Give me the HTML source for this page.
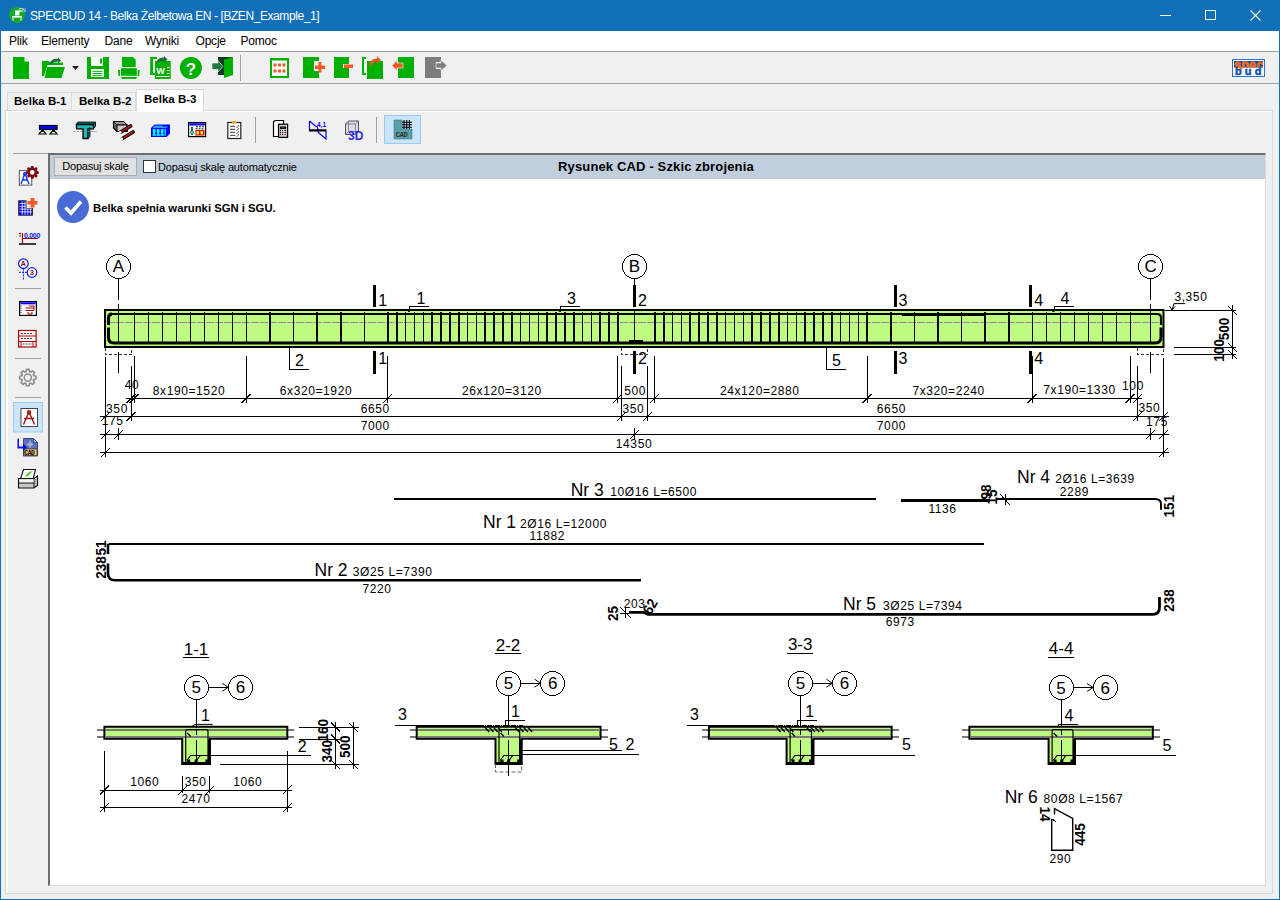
<!DOCTYPE html>
<html><head><meta charset="utf-8">
<style>
*{margin:0;padding:0;box-sizing:border-box}
html,body{width:1280px;height:900px;overflow:hidden;background:#f0f0f0;font-family:"Liberation Sans",sans-serif;}
.abs{position:absolute}
#title{left:0;top:0;width:1280px;height:31px;background:#1170b8;color:#fff;font-size:12px;letter-spacing:-0.42px}
#menu{left:1px;top:31px;width:1278px;height:20px;background:#fff;font-size:12px;color:#000;letter-spacing:-0.2px}
#menu span{position:absolute;top:3px}
#tb{left:1px;top:51px;width:1278px;height:33px;background:#f0f0f0;border-top:1px solid #a0a0a0;border-bottom:1px solid #a0a0a0}
#frame{left:0;top:0;width:1280px;height:900px;border:1px solid #1170b8;border-top:none;pointer-events:none}
.tab{position:absolute;font-weight:bold;font-size:11.5px;color:#000;border:1px solid #d9d9d9;border-bottom:none;background:#f0f0f0}
#panel{left:5px;top:110px;width:1268px;height:784px;border:1px solid #d9d9d9;background:#f0f0f0}
#panelw{left:6px;top:111px;width:1266px;height:782px;border-top:1px solid #fff;border-left:2px solid #fff}
#side{left:13px;top:153px;width:35px;height:733px;border-top:1px solid #a0a0a0;background:#f0f0f0}
#canvas{left:48px;top:153px;width:1218px;height:733px;background:#fff;border-left:2px solid #6e6e6e;border-top:2px solid #6e6e6e;border-right:1px solid #dcdcdc;border-bottom:1px solid #dcdcdc}
#hdr{left:50px;top:155px;width:1215px;height:24px;background:#c1cedc}
#btn{left:54px;top:157px;width:83px;height:19px;background:#e1e1e1;border:1px solid #adadad;font-size:11px;letter-spacing:-0.2px;color:#000;text-align:center;line-height:17px}
#chk{left:143px;top:160px;width:13px;height:13px;background:#fff;border:1px solid #333}
</style></head><body>
<div id="title" class="abs">
  <svg class="abs" style="left:8px;top:6px" width="18" height="18" viewBox="0 0 18 18">
    <circle cx="9" cy="9" r="8" fill="#12aa2a"/>
    <rect x="7" y="4.5" width="4.5" height="5" fill="#fff"/>
    <rect x="4" y="10" width="10" height="1.6" fill="#fff"/>
    <rect x="4.5" y="11.6" width="1" height="3" fill="#fff"/><rect x="12.5" y="11.6" width="1" height="3" fill="#fff"/>
    <text x="11" y="5.5" font-size="5" fill="#fff" font-family="Liberation Sans">EN</text>
  </svg>
  <span class="abs" style="left:30px;top:9px;white-space:nowrap">SPECBUD 14 - Belka Żelbetowa EN - [BZEN_Example_1]</span>
  <svg class="abs" style="left:1150px;top:0" width="130" height="31">
    <line x1="10" y1="15.5" x2="21" y2="15.5" stroke="#fff" stroke-width="1"/>
    <rect x="55.5" y="10.5" width="10" height="9" fill="none" stroke="#fff" stroke-width="1"/>
    <line x1="100.5" y1="10.5" x2="110.5" y2="20.5" stroke="#fff" stroke-width="1.1"/>
    <line x1="110.5" y1="10.5" x2="100.5" y2="20.5" stroke="#fff" stroke-width="1.1"/>
  </svg>
</div>
<div id="menu" class="abs">
  <span style="left:8px">Plik</span><span style="left:40px">Elementy</span><span style="left:103.5px">Dane</span>
  <span style="left:144px">Wyniki</span><span style="left:194.5px">Opcje</span><span style="left:239.5px">Pomoc</span>
</div>
<div id="tb" class="abs"></div>
<!--TOOLBAR-->
<svg class="abs" style="left:0;top:0;z-index:3" width="1280" height="150">
 <g fill="#00b000">
  <!-- new -->
  <path d="M13 57 H24 L29 62 V79 H13 Z"/>
  <path d="M24.5 57.5 L28.5 61.5 H24.5 Z" fill="#fff"/>
  <!-- open -->
  <path d="M42 61 H49 L50 62.5 H63 V65 H47.5 L44 76 H42 Z"/>
  <path d="M47 67 H65 L61.5 78 H44.5 Z"/>
  <path d="M49 64 Q52 58 58 59 L58 57.5 L61 60.5 L58 63.5 L58 61.5 Q53 61.5 51 65 Z" fill="#1d6e3a"/>
  <path d="M72 66 H79 L75.5 70 Z" fill="#222"/>
  <!-- save -->
  <path d="M87 57 H109 V79 H87 Z"/>
  <rect x="91" y="57" width="12" height="9" fill="#fff"/>
  <rect x="100" y="58.5" width="2" height="5"/>
  <rect x="91" y="69" width="13" height="8" fill="#fff"/>
  <rect x="92.5" y="70.8" width="10" height="1"/><rect x="92.5" y="73" width="10" height="1"/><rect x="92.5" y="75.2" width="10" height="1"/>
  <!-- print -->
  <path d="M122 57 H133 L135.7 59.7 V67 H122 Z"/>
  <path d="M120.9 68.2 H136.8 V75.8 H120.9 Z"/>
  <path d="M118 70 L120 70 L120 76 L118.5 76 Z"/><path d="M137.7 70 L139.7 70 L139.2 76 L137.7 76 Z"/>
  <path d="M121 77 H137 L136 79 H122 Z"/>
  <!-- word -->
  <path d="M150.2 57 H157 V59 H153 V73 H155 V75 H150.2 Z"/>
  <path d="M155 61 H170.7 V79 H155 Z"/>
  <path d="M156.5 61.5 Q159 57 164 57.5 V56 L167.5 59.5 L164 63 V61 Q160 60.5 158 63 Z" fill="#1d6e3a"/>
  <text x="156.3" y="73.5" font-size="9" font-weight="bold" fill="#fff" font-family="Liberation Sans">W</text>
  <rect x="167" y="67" width="2.5" height="1" fill="#fff"/><rect x="167" y="70" width="2.5" height="1" fill="#fff"/><rect x="167" y="73" width="2.5" height="1" fill="#fff"/>
  <rect x="156" y="76" width="13.5" height="1" fill="#fff"/>
  <!-- help -->
  <circle cx="190.9" cy="67.9" r="11"/>
  <text x="190.9" y="74.6" font-size="17" font-weight="bold" fill="#fff" text-anchor="middle" font-family="Liberation Sans">?</text>
  <!-- exit -->
  <path d="M218 57 H233 V75 H218 Z" fill="#0a3d1f"/>
  <path d="M224 59.5 L233 57 V75 L224 78 Z"/>
  <path d="M212 63 H218 V60.5 L223 66.5 L218 72 V69.5 H212 Z" fill="#1d7a40" stroke="#fff" stroke-width="0.6"/>
 </g>
 <rect x="240" y="55" width="1" height="26" fill="#a0a0a0"/>
 <g fill="#00b000">
  <!-- grid -->
  <path d="M270 58 H289 V78 H270 Z"/>
  <rect x="272" y="60.5" width="15" height="15.5" fill="#fff"/>
  <g fill="#f05a28">
   <rect x="273.5" y="63.5" width="3" height="3"/><rect x="278" y="63.5" width="3" height="3"/><rect x="282.5" y="63.5" width="3" height="3"/>
   <rect x="273.5" y="69.5" width="3" height="3"/><rect x="278" y="69.5" width="3" height="3"/><rect x="282.5" y="69.5" width="3" height="3"/>
  </g>
  <!-- add -->
  <path d="M303 57 H319 V61 H314 V71 H319 V78 H303 Z"/>
  <path d="M315 62.5 H318.5 V59 H321.5 V62.5 H325 V66 H321.5 V69.5 H318.5 V66 H315 Z" fill="#f05a28" transform="translate(0,3)"/>
  <!-- minus -->
  <path d="M334 57 H349 V64 H343 V68 H349 V78 H334 Z"/>
  <rect x="344" y="64.5" width="9" height="3.5" fill="#f05a28"/>
  <!-- copy -->
  <path d="M362 57 H366 V59 H364 V73 H366 V75 H362 Z"/>
  <path d="M367 61 H383 V79 H367 Z"/>
  <path d="M369 65 Q371 58 377 58.5 V56 L381 60 L377 64 V61.5 Q372 61 371.5 66 Z" fill="#f05a28"/>
  <!-- back -->
  <path d="M398 57 H414 V78 H398 Z"/>
  <path d="M392 65.5 L397 60 V63 H403 V68 H397 V71 Z" fill="#f05a28" stroke="#fff" stroke-width="0.6"/>
  <!-- forward -->
  <path d="M425 57 H441 V62 H436 V69 H441 V78 H425 Z" fill="#7d7d7d"/>
  <path d="M436 63 H441 V60 L447 65.5 L441 71 V68 H436 Z" fill="#7d7d7d" stroke="#fff" stroke-width="0.6"/>
 </g>
 <!-- logo -->
 <rect x="1232.5" y="59.5" width="32" height="17" fill="#fff" stroke="#2a72c8" stroke-width="1"/>
 <defs><clipPath id="band"><rect x="1234" y="61" width="29" height="6.5"/></clipPath></defs>
 <rect x="1234" y="61" width="29" height="6.5" fill="#0b50b0"/>
 <text x="1248.8" y="69" font-size="12.5" font-weight="bold" fill="#f26a1b" text-anchor="middle" font-family="Liberation Sans" letter-spacing="0.3" clip-path="url(#band)" stroke="#f26a1b" stroke-width="0.8">spec</text>
 <rect x="1239.5" y="67.5" width="3" height="2" fill="#f26a1b"/>
 <text x="1249.8" y="75" font-size="11" font-weight="bold" fill="#0b50b0" text-anchor="middle" font-family="Liberation Sans" letter-spacing="3.2" stroke="#0b50b0" stroke-width="0.5">bud</text>
</svg>

<div class="tab" style="left:7px;top:92px;width:65px;height:18px;padding:2px 0 0 6px">Belka B-1</div>
<div class="tab" style="left:71px;top:92px;width:65px;height:18px;padding:2px 0 0 7px">Belka B-2</div>
<div id="panel" class="abs"></div>
<div id="panelw" class="abs"></div>
<div class="tab" style="left:136px;top:89px;width:68px;height:22px;padding:3px 0 0 7px;background:#fff;z-index:2">Belka B-3</div>
<!--INNERTB-->
<div id="side" class="abs"></div>
<svg class="abs" style="left:0;top:0;z-index:3" width="440" height="500">
 <!-- beam -->
 <rect x="39.5" y="125.5" width="17.5" height="4" fill="#0000ff" stroke="#000" stroke-width="1.2"/>
 <path d="M42.5 130 L46 134 H39 Z M53.5 130 L57 134 H50 Z" fill="#fff" stroke="#000" stroke-width="1.2"/>
 <!-- T -->
 <path d="M78 122 H95.5 L93.5 124.5 H76 Z" fill="#0e6d6d" stroke="#000" stroke-width="0.8"/>
 <path d="M76.5 124.5 H93.5 V128.8 H88 V138.5 H83 V128.8 H76.5 Z" fill="#1ab8b8" stroke="#000" stroke-width="1.3"/>
 <path d="M93.5 124.5 L95.5 122 V126.5 L93.5 128.8 Z M88 128.8 L90 127.5 V136.5 L88 138.5 Z" fill="#0e6d6d" stroke="#000" stroke-width="0.8"/>
 <line x1="73.5" y1="131.5" x2="97" y2="131.5" stroke="#888" stroke-width="0.8" stroke-dasharray="2 1.5"/>
 <!-- box + rods -->
 <path d="M113.5 121.5 H123.5 L127 125 V131.5 H117 L113.5 128 Z" fill="#666" stroke="#000" stroke-width="1.2"/>
 <path d="M113.5 121.5 H123.5 L127 125 H117 Z" fill="#999" stroke="#000" stroke-width="0.8"/>
 <rect x="117" y="125" width="10" height="6.5" fill="#c8c8c8" stroke="#000" stroke-width="1"/>
 <path d="M121 132 L130.5 126" stroke="#000" stroke-width="3.8" stroke-linecap="round"/>
 <path d="M122 131.4 L130.5 126" stroke="#c01020" stroke-width="1.6" stroke-linecap="round"/>
 <circle cx="120.3" cy="132.4" r="1.3" fill="#fff"/>
 <path d="M122.5 138.5 L133 132" stroke="#000" stroke-width="3.8" stroke-linecap="round"/>
 <path d="M123.5 137.9 L133 132" stroke="#c01020" stroke-width="1.6" stroke-linecap="round"/>
 <circle cx="121.8" cy="138.9" r="1.3" fill="#fff"/>
 <!-- blue box -->
 <path d="M151 128 L154.5 124.5 H170 V133.5 L166.5 137 H151 Z" fill="#0000ff"/>
 <path d="M154.5 125.5 H162 L163 126.5 H168.5 L166 128 H152.5 Z" fill="#3399ff"/>
 <g fill="#00ffff">
  <path d="M152.8 129 H155.5 V132.5 L154.8 134 H155.8 V135.8 H152.5 V134 H153.5 L152.8 132.5 Z"/>
  <path d="M156.8 129 H159.5 V132.5 L158.8 134 H159.8 V135.8 H156.5 V134 H157.5 L156.8 132.5 Z"/>
  <path d="M160.8 129 H163.5 V132.5 L162.8 134 H163.8 V135.8 H160.5 V134 H161.5 L160.8 132.5 Z"/>
  <path d="M164.5 129 H165.8 V135.8 H164.5 Z"/>
 </g>
 <!-- window -->
 <rect x="188.6" y="122.6" width="17" height="14" fill="#fff" stroke="#000" stroke-width="1.2"/>
 <rect x="189.3" y="123.3" width="15.6" height="2.2" fill="#0000ff"/>
 <rect x="195.5" y="130" width="9" height="5.5" fill="#c00000"/>
 <path d="M196.5 131 H199 V134.5 H196.5 Z M200.5 131 H203 V134.5 H200.5 Z" fill="#ffee00"/>
 <path d="M191.5 127 V130.5 L190.5 132.5 L192 135 L193.5 132.5 L192.5 130.5 V127 Z" fill="#00eeee" stroke="#000" stroke-width="0.6"/>
 <path d="M196 126.8 H204 M195.5 128.8 H204" stroke="#000" stroke-width="0.9" stroke-dasharray="2 1"/>
 <!-- clipboard -->
 <rect x="227.8" y="122.5" width="13" height="16" fill="#fff" stroke="#222" stroke-width="1.2"/>
 <path d="M231.5 123.5 L232.5 121 H236 L237 123.5 Z" fill="#f0a030"/>
 <path d="M230 126.3 H235 M230 129.3 H235 M230 132.3 H235 M230 135.3 H235" stroke="#222" stroke-width="0.9"/>
 <path d="M236 126.5 L237 127.5 L239 125 M236 129.5 L237 130.5 L239 128 M236 132.5 L237 133.5 L239 131 M236 135.5 L237 136.5 L239 134" stroke="#222" stroke-width="0.7" fill="none"/>
 <!-- separators -->
 <rect x="255" y="117" width="1" height="26" fill="#a0a0a0"/>
 <rect x="376" y="117" width="1" height="26" fill="#a0a0a0"/>
 <!-- calc -->
 <path d="M273.5 122 L275 120.5 H283.5 V125 H278.5 V136.5 H273.5 Z" fill="#fff" stroke="#000" stroke-width="1.2"/>
 <rect x="278.6" y="124.2" width="9" height="13.2" fill="#ccc" stroke="#000" stroke-width="1.2"/>
 <rect x="280" y="126.5" width="6" height="2.5" fill="#000"/>
 <rect x="282.5" y="127.2" width="1" height="1" fill="#00ddee"/>
 <path d="M280 130.5 H281 M282 130.5 H283 M284.5 130.5 H286 M280 132.5 H281 M282 132.5 H283 M284.5 132.5 H286 M280 134.5 H281 M282 134.5 H283" stroke="#000" stroke-width="1"/>
 <path d="M284.5 134.5 H286" stroke="#f00" stroke-width="1"/>
 <!-- diagram -->
 <path d="M309.5 121 L316 126.5 H317 L318 129 V130" fill="none" stroke="#0000ff" stroke-width="1.2"/>
 <path d="M309.5 121 V130" stroke="#0000ff" stroke-width="1.2"/>
 <path d="M318 131 V132 L319.5 133.5 L326 139 V131" fill="none" stroke="#0000ff" stroke-width="1.2"/>
 <rect x="309" y="129.3" width="17.5" height="2.2" fill="#000"/>
 <text x="317" y="126.5" font-size="6.5" font-weight="bold" fill="#0000ff" font-family="Liberation Sans">4,1</text>
 <!-- 3D -->
 <path d="M345.5 124 L348.5 121 H358.5 V131.5 L355.5 134.5 H345.5 Z" fill="#ddd8ee" stroke="#555" stroke-width="1"/>
 <path d="M345.5 124 H355.5 V134.5 M355.5 124 L358.5 121 M348.5 121 V131.5 H358.5 M348.5 131.5 L345.5 134.5" fill="none" stroke="#666" stroke-width="0.7"/>
 <text x="348" y="139.5" font-size="12" font-weight="bold" fill="#2a2ae0" font-family="Liberation Sans">3D</text>
 <!-- CAD selected -->
 <rect x="384.5" y="115.5" width="36" height="28" fill="#cce4f7" stroke="#99ccf5" stroke-width="1"/>
 <path d="M394 120 H402 V129 H412 V139 H394 Z" fill="#5aa0a8" stroke="#3d7f88" stroke-width="0.6"/>
 <path d="M404 120 V129 M406.7 120 V129 M409.4 120 V129 M402 122.3 H412 M402 124.8 H412 M402 127.3 H412" stroke="#000" stroke-width="1.1"/>
 <text x="395.5" y="137" font-size="7.5" fill="#333" font-family="Liberation Mono" font-weight="bold" letter-spacing="-0.6">CAD</text>

 <!-- ===== sidebar ===== -->
 <!-- compass+gear -->
 <rect x="19.3" y="170.6" width="12.5" height="14.5" fill="#fff" stroke="#444" stroke-width="0.9"/>
 <path d="M21 184 L25 173.5 L29 184 M23 180 H28" stroke="#0033ff" stroke-width="1.3" fill="none"/>
 <circle cx="25" cy="174" r="1.5" fill="none" stroke="#0033ff" stroke-width="1.1"/>
 <circle cx="32.3" cy="172.4" r="3.6" fill="#fff" stroke="#7a0a0a" stroke-width="2.6"/><circle cx="37.50" cy="172.40" r="1.5" fill="#7a0a0a"/><circle cx="35.98" cy="176.08" r="1.5" fill="#7a0a0a"/><circle cx="32.30" cy="177.60" r="1.5" fill="#7a0a0a"/><circle cx="28.62" cy="176.08" r="1.5" fill="#7a0a0a"/><circle cx="27.10" cy="172.40" r="1.5" fill="#7a0a0a"/><circle cx="28.62" cy="168.72" r="1.5" fill="#7a0a0a"/><circle cx="32.30" cy="167.20" r="1.5" fill="#7a0a0a"/><circle cx="35.98" cy="168.72" r="1.5" fill="#7a0a0a"/>
 <!-- grid plus -->
 <path d="M18.7 200.7 H26 V208.5 H32.5 V215.3 H18.7 Z" fill="#0000ff" stroke="#333" stroke-width="1.1"/>
 <path d="M19.5 203.6 H25.5 M19.5 206.3 H25.5 M19.5 209.1 H32 M19.5 211.9 H32 M22.3 201.5 V214.8 M25 201.5 V214.8 M27.8 209 V214.8 M30.5 209 V214.8" stroke="#ffffff" stroke-width="0.9" stroke-opacity="0.85"/>
 <path d="M30.5 198 H34.5 V201 H37.5 V204.5 H34.5 V207.5 H30.5 V204.5 H27.5 V201 H30.5 Z" fill="#f05a28"/>
 <!-- ±0.000 -->
 <text x="24" y="237.5" font-size="7" font-weight="bold" fill="#0022ee" font-family="Liberation Sans" letter-spacing="-0.3">0.000</text>
 <path d="M22.5 233 V243 M22 238.5 H38" stroke="#a00000" stroke-width="1.2"/>
 <path d="M19 233.5 H21 M20 232.5 V234.5 M19 236 H21" stroke="#a00000" stroke-width="0.9"/>
 <path d="M19 244 H36" stroke="#000" stroke-width="1.5"/>
 <!-- axis A 3 -->
 <path d="M23.4 268.5 V280 M19 272.3 H28" stroke="#0022ee" stroke-width="1" stroke-dasharray="2 1"/>
 <circle cx="23.4" cy="263.6" r="4.8" fill="#fff" stroke="#0022ee" stroke-width="1.2"/>
 <text x="23.4" y="266.3" font-size="7" font-weight="bold" fill="#a00000" text-anchor="middle" font-family="Liberation Sans">A</text>
 <circle cx="32" cy="272.5" r="4.8" fill="#fff" stroke="#0022ee" stroke-width="1.2"/>
 <text x="32" y="275.2" font-size="7" font-weight="bold" fill="#a00000" text-anchor="middle" font-family="Liberation Sans">3</text>
 <!-- separators -->
 <rect x="15" y="288" width="26" height="1" fill="#a0a0a0"/>
 <rect x="15" y="358" width="26" height="1" fill="#a0a0a0"/>
 <rect x="15" y="397" width="26" height="1" fill="#a0a0a0"/>
 <!-- window -->
 <rect x="19.6" y="301.6" width="16.8" height="13.8" fill="#fff" stroke="#000" stroke-width="1.2"/>
 <rect x="20.3" y="302.3" width="15.4" height="2" fill="#0000ff"/>
 <path d="M21 305.5 V313" stroke="#000" stroke-width="0.9" stroke-dasharray="1 1.2"/>
 <path d="M25.5 308 H34 M29 306 H34 V310 M25.5 310.5 H34 M28 312 V314 H32 V312" stroke="#a00000" stroke-width="1" fill="none"/>
 <!-- table -->
 <rect x="18.6" y="330.5" width="17.5" height="16.5" fill="#fff" stroke="#b00000" stroke-width="1.2"/>
 <path d="M18.6 336 H36 M18.6 341.5 H36 M21 341.5 V347 M33 341.5 V347" stroke="#b00000" stroke-width="1"/>
 <path d="M21 333.5 H33 M21 338.5 H33 M22.5 344 H32" stroke="#444" stroke-width="1.2" stroke-dasharray="2 1"/>
 <!-- gear -->
 <path d="M 33.72 375.77 L 35.98 376.20 L 35.98 379.00 L 33.72 379.43 L 33.28 380.49 L 34.58 382.39 L 32.59 384.38 L 30.69 383.08 L 29.63 383.52 L 29.20 385.78 L 26.40 385.78 L 25.97 383.52 L 24.91 383.08 L 23.01 384.38 L 21.02 382.39 L 22.32 380.49 L 21.88 379.43 L 19.62 379.00 L 19.62 376.20 L 21.88 375.77 L 22.32 374.71 L 21.02 372.81 L 23.01 370.82 L 24.91 372.12 L 25.97 371.68 L 26.40 369.42 L 29.20 369.42 L 29.63 371.68 L 30.69 372.12 L 32.59 370.82 L 34.58 372.81 L 33.28 374.71 Z" fill="#f0f0f0" stroke="#8c8c8c" stroke-width="1.6" stroke-linejoin="round"/>
 <circle cx="27.8" cy="377.6" r="3.6" fill="#f0f0f0" stroke="#8c8c8c" stroke-width="1.4"/>
 <!-- selected compass -->
 <rect x="13.5" y="402.5" width="29" height="29.5" fill="#cce4f7" stroke="#99ccf5" stroke-width="1"/>
 <rect x="21" y="408.5" width="16.5" height="18" fill="#fff" stroke="#333" stroke-width="0.9"/>
 <path d="M23.5 424.5 L29 412 L34.5 424.5 M24 418.5 H34" stroke="#a01010" stroke-width="1.4" fill="none"/>
 <circle cx="29" cy="412.3" r="1.6" fill="none" stroke="#a01010" stroke-width="1.2"/>
 <!-- CAD doc -->
 <path d="M23.5 438.5 H33.5 L37.5 442.5 V456 H23.5 Z" fill="#5a6fb8" stroke="#2a3a80" stroke-width="0.9"/>
 <path d="M33.5 438.5 V442.5 H37.5 Z" fill="#a8b8e8" stroke="#2a3a80" stroke-width="0.7"/>
 <path d="M30 440.5 V448 M26.5 444.3 H33.5" stroke="#c0c8e8" stroke-width="0.8"/>
 <circle cx="30" cy="444.3" r="1.8" fill="none" stroke="#c0c8e8" stroke-width="0.7"/>
 <rect x="24" y="449" width="13" height="6.5" fill="#f0c860" stroke="#222" stroke-width="0.6"/>
 <text x="24.3" y="455" font-size="6.3" font-weight="bold" fill="#000" font-family="Liberation Mono" letter-spacing="-0.4">CAD</text>
 <path d="M19 438.5 V446.5 H23 V443.5 L27 447.5 L23 451.5 V448.5 H17.5 V438.5 Z" fill="#0010ee"/>
 <!-- printer -->
 <path d="M23.5 469.5 H35.5 L33 479 H20.5 Z" fill="#fff" stroke="#111" stroke-width="1.1"/>
 <path d="M24.5 476.5 L29.5 471.5 H32.5 L27.5 476.5 Z" fill="#55cc22"/>
 <path d="M18.5 478.5 H34 L37.5 476 V485.5 L34 488 H18.5 Z" fill="#c8c8c8" stroke="#111" stroke-width="1.1"/>
 <path d="M34 478.5 V488 M34 478.5 L37.5 476" stroke="#111" stroke-width="0.9" fill="none"/>
 <path d="M18.5 483 H34" stroke="#111" stroke-width="1.1"/>
 <rect x="19.5" y="479.5" width="14" height="2.8" fill="#f4f4f4"/>
 <path d="M35 479 V486" stroke="#666" stroke-width="1.2" stroke-dasharray="1 1"/>
</svg>

<div id="canvas" class="abs"></div>
<div id="hdr" class="abs"></div>
<div id="btn" class="abs">Dopasuj skalę</div>
<div id="chk" class="abs"></div>
<div class="abs" style="left:158px;top:161px;font-size:11px;letter-spacing:-0.16px;white-space:nowrap">Dopasuj skalę automatycznie</div>
<div class="abs" style="left:558px;top:159px;font-size:13px;letter-spacing:0.15px;font-weight:bold;white-space:nowrap">Rysunek CAD - Szkic zbrojenia</div>
<svg class="abs" style="left:56px;top:190px" width="34" height="34">
  <circle cx="17" cy="17" r="16" fill="#4a6bd6"/>
  <path d="M 9.5 17.5 L 15 23 L 25 11.5" stroke="#fff" stroke-width="3.6" fill="none"/>
</svg>
<div class="abs" style="left:93px;top:202px;font-size:11.3px;font-weight:bold;white-space:nowrap">Belka spełnia warunki SGN i SGU.</div>
<svg class="abs" style="left:0;top:0" width="1280" height="900" font-family="Liberation Sans" >
<circle cx="118.50" cy="266.50" r="12.00" stroke="#000" stroke-width="1" fill="none" shape-rendering="crispEdges"/>
<text x="118.30" y="271.60" font-size="17" text-anchor="middle" font-weight="normal" >A</text>
<line x1="118.50" y1="278.50" x2="118.50" y2="300.00" stroke="#000" stroke-width="1" shape-rendering="crispEdges" />
<line x1="118.50" y1="304.00" x2="118.50" y2="309.00" stroke="#000" stroke-width="1" shape-rendering="crispEdges" />
<circle cx="634.50" cy="266.50" r="12.00" stroke="#000" stroke-width="1" fill="none" shape-rendering="crispEdges"/>
<text x="634.41" y="271.60" font-size="17" text-anchor="middle" font-weight="normal" >B</text>
<line x1="634.50" y1="278.50" x2="634.50" y2="285.00" stroke="#000" stroke-width="1" shape-rendering="crispEdges" />
<circle cx="1150.50" cy="266.50" r="12.00" stroke="#000" stroke-width="1" fill="none" shape-rendering="crispEdges"/>
<text x="1150.52" y="271.60" font-size="17" text-anchor="middle" font-weight="normal" >C</text>
<line x1="1150.50" y1="278.50" x2="1150.50" y2="300.00" stroke="#000" stroke-width="1" shape-rendering="crispEdges" />
<line x1="1150.50" y1="304.00" x2="1150.50" y2="309.00" stroke="#000" stroke-width="1" shape-rendering="crispEdges" />
<rect x="105.00" y="310.00" width="1058.50" height="37.00" stroke="#000" stroke-width="2" fill="#bffb80" />
<line x1="107.00" y1="322.50" x2="1162.00" y2="322.50" stroke="#8a8aa8" stroke-width="1" shape-rendering="crispEdges" stroke-dasharray="8 1"/>
<rect x="134" y="312" width="1" height="31" fill="#000" shape-rendering="crispEdges"/>
<rect x="148" y="312" width="1" height="31" fill="#000" shape-rendering="crispEdges"/>
<rect x="162" y="312" width="1" height="31" fill="#000" shape-rendering="crispEdges"/>
<rect x="176" y="312" width="1" height="31" fill="#000" shape-rendering="crispEdges"/>
<rect x="190" y="312" width="1" height="31" fill="#000" shape-rendering="crispEdges"/>
<rect x="204" y="312" width="1" height="31" fill="#000" shape-rendering="crispEdges"/>
<rect x="218" y="312" width="1" height="31" fill="#000" shape-rendering="crispEdges"/>
<rect x="232" y="312" width="1" height="31" fill="#000" shape-rendering="crispEdges"/>
<rect x="246" y="312" width="1" height="31" fill="#000" shape-rendering="crispEdges"/>
<rect x="269" y="312" width="2" height="31" fill="#000" shape-rendering="crispEdges"/>
<rect x="293" y="312" width="1" height="31" fill="#000" shape-rendering="crispEdges"/>
<rect x="316" y="312" width="2" height="31" fill="#000" shape-rendering="crispEdges"/>
<rect x="340" y="312" width="2" height="31" fill="#000" shape-rendering="crispEdges"/>
<rect x="364" y="312" width="1" height="31" fill="#000" shape-rendering="crispEdges"/>
<rect x="387" y="312" width="2" height="31" fill="#000" shape-rendering="crispEdges"/>
<rect x="396" y="312" width="2" height="31" fill="#000" shape-rendering="crispEdges"/>
<rect x="405" y="312" width="1" height="31" fill="#000" shape-rendering="crispEdges"/>
<rect x="414" y="312" width="1" height="31" fill="#000" shape-rendering="crispEdges"/>
<rect x="423" y="312" width="1" height="31" fill="#000" shape-rendering="crispEdges"/>
<rect x="431" y="312" width="2" height="31" fill="#000" shape-rendering="crispEdges"/>
<rect x="440" y="312" width="2" height="31" fill="#000" shape-rendering="crispEdges"/>
<rect x="449" y="312" width="2" height="31" fill="#000" shape-rendering="crispEdges"/>
<rect x="458" y="312" width="2" height="31" fill="#000" shape-rendering="crispEdges"/>
<rect x="467" y="312" width="1" height="31" fill="#000" shape-rendering="crispEdges"/>
<rect x="476" y="312" width="1" height="31" fill="#000" shape-rendering="crispEdges"/>
<rect x="484" y="312" width="2" height="31" fill="#000" shape-rendering="crispEdges"/>
<rect x="493" y="312" width="2" height="31" fill="#000" shape-rendering="crispEdges"/>
<rect x="502" y="312" width="2" height="31" fill="#000" shape-rendering="crispEdges"/>
<rect x="511" y="312" width="2" height="31" fill="#000" shape-rendering="crispEdges"/>
<rect x="520" y="312" width="1" height="31" fill="#000" shape-rendering="crispEdges"/>
<rect x="529" y="312" width="1" height="31" fill="#000" shape-rendering="crispEdges"/>
<rect x="538" y="312" width="1" height="31" fill="#000" shape-rendering="crispEdges"/>
<rect x="546" y="312" width="2" height="31" fill="#000" shape-rendering="crispEdges"/>
<rect x="555" y="312" width="2" height="31" fill="#000" shape-rendering="crispEdges"/>
<rect x="564" y="312" width="2" height="31" fill="#000" shape-rendering="crispEdges"/>
<rect x="573" y="312" width="2" height="31" fill="#000" shape-rendering="crispEdges"/>
<rect x="582" y="312" width="1" height="31" fill="#000" shape-rendering="crispEdges"/>
<rect x="591" y="312" width="1" height="31" fill="#000" shape-rendering="crispEdges"/>
<rect x="599" y="312" width="2" height="31" fill="#000" shape-rendering="crispEdges"/>
<rect x="608" y="312" width="2" height="31" fill="#000" shape-rendering="crispEdges"/>
<rect x="617" y="312" width="2" height="31" fill="#000" shape-rendering="crispEdges"/>
<rect x="654" y="312" width="2" height="31" fill="#000" shape-rendering="crispEdges"/>
<rect x="663" y="312" width="2" height="31" fill="#000" shape-rendering="crispEdges"/>
<rect x="672" y="312" width="1" height="31" fill="#000" shape-rendering="crispEdges"/>
<rect x="681" y="312" width="1" height="31" fill="#000" shape-rendering="crispEdges"/>
<rect x="689" y="312" width="2" height="31" fill="#000" shape-rendering="crispEdges"/>
<rect x="698" y="312" width="2" height="31" fill="#000" shape-rendering="crispEdges"/>
<rect x="707" y="312" width="2" height="31" fill="#000" shape-rendering="crispEdges"/>
<rect x="716" y="312" width="2" height="31" fill="#000" shape-rendering="crispEdges"/>
<rect x="725" y="312" width="1" height="31" fill="#000" shape-rendering="crispEdges"/>
<rect x="734" y="312" width="1" height="31" fill="#000" shape-rendering="crispEdges"/>
<rect x="743" y="312" width="1" height="31" fill="#000" shape-rendering="crispEdges"/>
<rect x="751" y="312" width="2" height="31" fill="#000" shape-rendering="crispEdges"/>
<rect x="760" y="312" width="2" height="31" fill="#000" shape-rendering="crispEdges"/>
<rect x="769" y="312" width="2" height="31" fill="#000" shape-rendering="crispEdges"/>
<rect x="778" y="312" width="2" height="31" fill="#000" shape-rendering="crispEdges"/>
<rect x="787" y="312" width="1" height="31" fill="#000" shape-rendering="crispEdges"/>
<rect x="796" y="312" width="1" height="31" fill="#000" shape-rendering="crispEdges"/>
<rect x="804" y="312" width="2" height="31" fill="#000" shape-rendering="crispEdges"/>
<rect x="813" y="312" width="2" height="31" fill="#000" shape-rendering="crispEdges"/>
<rect x="822" y="312" width="2" height="31" fill="#000" shape-rendering="crispEdges"/>
<rect x="831" y="312" width="2" height="31" fill="#000" shape-rendering="crispEdges"/>
<rect x="840" y="312" width="1" height="31" fill="#000" shape-rendering="crispEdges"/>
<rect x="849" y="312" width="1" height="31" fill="#000" shape-rendering="crispEdges"/>
<rect x="858" y="312" width="1" height="31" fill="#000" shape-rendering="crispEdges"/>
<rect x="866" y="312" width="2" height="31" fill="#000" shape-rendering="crispEdges"/>
<rect x="890" y="312" width="2" height="31" fill="#000" shape-rendering="crispEdges"/>
<rect x="914" y="312" width="1" height="31" fill="#000" shape-rendering="crispEdges"/>
<rect x="937" y="312" width="2" height="31" fill="#000" shape-rendering="crispEdges"/>
<rect x="961" y="312" width="1" height="31" fill="#000" shape-rendering="crispEdges"/>
<rect x="984" y="312" width="2" height="31" fill="#000" shape-rendering="crispEdges"/>
<rect x="1008" y="312" width="2" height="31" fill="#000" shape-rendering="crispEdges"/>
<rect x="1032" y="312" width="1" height="31" fill="#000" shape-rendering="crispEdges"/>
<rect x="1046" y="312" width="1" height="31" fill="#000" shape-rendering="crispEdges"/>
<rect x="1060" y="312" width="1" height="31" fill="#000" shape-rendering="crispEdges"/>
<rect x="1074" y="312" width="1" height="31" fill="#000" shape-rendering="crispEdges"/>
<rect x="1088" y="312" width="1" height="31" fill="#000" shape-rendering="crispEdges"/>
<rect x="1102" y="312" width="1" height="31" fill="#000" shape-rendering="crispEdges"/>
<rect x="1116" y="312" width="1" height="31" fill="#000" shape-rendering="crispEdges"/>
<rect x="1130" y="312" width="1" height="31" fill="#000" shape-rendering="crispEdges"/>
<line x1="118.50" y1="311.00" x2="118.50" y2="342.00" stroke="#000" stroke-width="1" shape-rendering="crispEdges" />
<line x1="634.50" y1="311.00" x2="634.50" y2="342.00" stroke="#000" stroke-width="1" shape-rendering="crispEdges" />
<line x1="1150.50" y1="311.00" x2="1150.50" y2="342.00" stroke="#000" stroke-width="1" shape-rendering="crispEdges" />
<path d="M 111 314 L 1157 314 Q 1161 314 1161 318 L 1161 325" stroke="#000" stroke-width="2.2" fill="none" />
<path d="M 1161 327.5 L 1161 337 Q 1161 343 1155 343 L 114 343 Q 108.5 343 108.5 337.5 L 108.5 327.5" stroke="#000" stroke-width="3" fill="none" />
<path d="M 108.5 325 L 108.5 318 Q 108.5 314 112 314" stroke="#000" stroke-width="3" fill="none" />
<line x1="902.00" y1="314.50" x2="986.00" y2="314.50" stroke="#000" stroke-width="3" shape-rendering="crispEdges" />
<line x1="629.00" y1="341.50" x2="643.00" y2="341.50" stroke="#000" stroke-width="3" shape-rendering="crispEdges" />
<line x1="374.50" y1="284.50" x2="374.50" y2="306.50" stroke="#000" stroke-width="3" shape-rendering="crispEdges" />
<line x1="374.50" y1="351.00" x2="374.50" y2="373.50" stroke="#000" stroke-width="3" shape-rendering="crispEdges" />
<text x="378.30" y="305.60" font-size="16" text-anchor="start" font-weight="normal" >1</text>
<text x="378.30" y="364.00" font-size="16" text-anchor="start" font-weight="normal" >1</text>
<line x1="634.50" y1="284.50" x2="634.50" y2="306.50" stroke="#000" stroke-width="3" shape-rendering="crispEdges" />
<line x1="634.50" y1="351.00" x2="634.50" y2="373.50" stroke="#000" stroke-width="3" shape-rendering="crispEdges" />
<text x="637.90" y="305.60" font-size="16" text-anchor="start" font-weight="normal" >2</text>
<text x="637.90" y="364.00" font-size="16" text-anchor="start" font-weight="normal" >2</text>
<line x1="895.50" y1="284.50" x2="895.50" y2="306.50" stroke="#000" stroke-width="3" shape-rendering="crispEdges" />
<line x1="895.50" y1="351.00" x2="895.50" y2="373.50" stroke="#000" stroke-width="3" shape-rendering="crispEdges" />
<text x="898.50" y="305.60" font-size="16" text-anchor="start" font-weight="normal" >3</text>
<text x="898.50" y="364.00" font-size="16" text-anchor="start" font-weight="normal" >3</text>
<line x1="1030.50" y1="284.50" x2="1030.50" y2="306.50" stroke="#000" stroke-width="3" shape-rendering="crispEdges" />
<line x1="1030.50" y1="351.00" x2="1030.50" y2="373.50" stroke="#000" stroke-width="3" shape-rendering="crispEdges" />
<text x="1034.30" y="305.60" font-size="16" text-anchor="start" font-weight="normal" >4</text>
<text x="1034.30" y="364.00" font-size="16" text-anchor="start" font-weight="normal" >4</text>
<line x1="409.50" y1="306.00" x2="409.50" y2="311.00" stroke="#000" stroke-width="1" shape-rendering="crispEdges" />
<line x1="409.00" y1="306.50" x2="429.00" y2="306.50" stroke="#000" stroke-width="1" shape-rendering="crispEdges" />
<rect x="408.00" y="310.00" width="2.00" height="2.00" stroke="#000" stroke-width="0" fill="#000" />
<text x="416.50" y="303.80" font-size="16" text-anchor="start" font-weight="normal" >1</text>
<line x1="560.50" y1="306.00" x2="560.50" y2="311.00" stroke="#000" stroke-width="1" shape-rendering="crispEdges" />
<line x1="560.00" y1="306.50" x2="580.00" y2="306.50" stroke="#000" stroke-width="1" shape-rendering="crispEdges" />
<rect x="559.00" y="310.00" width="2.00" height="2.00" stroke="#000" stroke-width="0" fill="#000" />
<text x="567.00" y="303.80" font-size="16" text-anchor="start" font-weight="normal" >3</text>
<line x1="1054.50" y1="306.00" x2="1054.50" y2="311.00" stroke="#000" stroke-width="1" shape-rendering="crispEdges" />
<line x1="1053.50" y1="306.50" x2="1073.50" y2="306.50" stroke="#000" stroke-width="1" shape-rendering="crispEdges" />
<rect x="1052.50" y="310.00" width="2.00" height="2.00" stroke="#000" stroke-width="0" fill="#000" />
<text x="1060.50" y="303.80" font-size="16" text-anchor="start" font-weight="normal" >4</text>
<line x1="289.50" y1="347.00" x2="289.50" y2="369.50" stroke="#000" stroke-width="1" shape-rendering="crispEdges" />
<line x1="289.00" y1="369.50" x2="309.00" y2="369.50" stroke="#000" stroke-width="1" shape-rendering="crispEdges" />
<text x="295.00" y="366.40" font-size="16" text-anchor="start" font-weight="normal" >2</text>
<line x1="826.50" y1="347.00" x2="826.50" y2="369.50" stroke="#000" stroke-width="1" shape-rendering="crispEdges" />
<line x1="826.00" y1="369.50" x2="846.00" y2="369.50" stroke="#000" stroke-width="1" shape-rendering="crispEdges" />
<text x="832.00" y="366.40" font-size="16" text-anchor="start" font-weight="normal" >5</text>
<path d="M 105 348 L 105 354.5 L 131.7 354.5 L 131.7 348" stroke="#333" stroke-width="1" fill="none" stroke-dasharray="3 2" shape-rendering="crispEdges"/>
<path d="M 621 348 L 621 354.5 L 647.4 354.5 L 647.4 348" stroke="#333" stroke-width="1" fill="none" stroke-dasharray="3 2" shape-rendering="crispEdges"/>
<path d="M 1137.4 348 L 1137.4 354.5 L 1163.6 354.5 L 1163.6 348" stroke="#333" stroke-width="1" fill="none" stroke-dasharray="3 2" shape-rendering="crispEdges"/>
<line x1="118.50" y1="352.00" x2="118.50" y2="373.30" stroke="#000" stroke-width="1" shape-rendering="crispEdges" />
<line x1="1150.50" y1="352.00" x2="1150.50" y2="373.30" stroke="#000" stroke-width="1" shape-rendering="crispEdges" />
<line x1="634.50" y1="352.00" x2="634.50" y2="351.00" stroke="#000" stroke-width="1" shape-rendering="crispEdges" />
<line x1="126.30" y1="398.50" x2="1142.00" y2="398.50" stroke="#000" stroke-width="1" shape-rendering="crispEdges" />
<line x1="100.30" y1="416.50" x2="1169.00" y2="416.50" stroke="#000" stroke-width="1" shape-rendering="crispEdges" />
<line x1="100.30" y1="434.50" x2="1169.00" y2="434.50" stroke="#000" stroke-width="1" shape-rendering="crispEdges" />
<line x1="100.30" y1="452.50" x2="1169.00" y2="452.50" stroke="#000" stroke-width="1" shape-rendering="crispEdges" />
<line x1="134.50" y1="356.00" x2="134.50" y2="403.00" stroke="#000" stroke-width="1" shape-rendering="crispEdges" />
<line x1="246.50" y1="356.00" x2="246.50" y2="403.00" stroke="#000" stroke-width="1" shape-rendering="crispEdges" />
<line x1="387.50" y1="356.00" x2="387.50" y2="403.00" stroke="#000" stroke-width="1" shape-rendering="crispEdges" />
<line x1="617.50" y1="356.00" x2="617.50" y2="403.00" stroke="#000" stroke-width="1" shape-rendering="crispEdges" />
<line x1="654.50" y1="356.00" x2="654.50" y2="403.00" stroke="#000" stroke-width="1" shape-rendering="crispEdges" />
<line x1="867.50" y1="356.00" x2="867.50" y2="403.00" stroke="#000" stroke-width="1" shape-rendering="crispEdges" />
<line x1="1032.50" y1="356.00" x2="1032.50" y2="403.00" stroke="#000" stroke-width="1" shape-rendering="crispEdges" />
<line x1="1130.50" y1="356.00" x2="1130.50" y2="403.00" stroke="#000" stroke-width="1" shape-rendering="crispEdges" />
<line x1="131.50" y1="366.00" x2="131.50" y2="421.30" stroke="#000" stroke-width="1" shape-rendering="crispEdges" />
<line x1="1137.50" y1="366.00" x2="1137.50" y2="421.30" stroke="#000" stroke-width="1" shape-rendering="crispEdges" />
<line x1="621.50" y1="366.00" x2="621.50" y2="421.30" stroke="#000" stroke-width="1" shape-rendering="crispEdges" />
<line x1="647.50" y1="366.00" x2="647.50" y2="421.30" stroke="#000" stroke-width="1" shape-rendering="crispEdges" />
<line x1="105.50" y1="357.30" x2="105.50" y2="457.30" stroke="#000" stroke-width="1" shape-rendering="crispEdges" />
<line x1="1163.50" y1="358.00" x2="1163.50" y2="457.30" stroke="#000" stroke-width="1" shape-rendering="crispEdges" />
<line x1="118.50" y1="428.40" x2="118.50" y2="439.50" stroke="#000" stroke-width="1" shape-rendering="crispEdges" />
<line x1="634.50" y1="428.40" x2="634.50" y2="439.50" stroke="#000" stroke-width="1" shape-rendering="crispEdges" />
<line x1="1150.50" y1="428.40" x2="1150.50" y2="439.50" stroke="#000" stroke-width="1" shape-rendering="crispEdges" />
<line x1="126.71" y1="402.80" x2="135.71" y2="393.80" stroke="#000" stroke-width="1" shape-rendering="crispEdges" />
<line x1="129.65" y1="402.80" x2="138.65" y2="393.80" stroke="#000" stroke-width="1" shape-rendering="crispEdges" />
<line x1="241.72" y1="402.80" x2="250.72" y2="393.80" stroke="#000" stroke-width="1" shape-rendering="crispEdges" />
<line x1="383.29" y1="402.80" x2="392.29" y2="393.80" stroke="#000" stroke-width="1" shape-rendering="crispEdges" />
<line x1="613.32" y1="402.80" x2="622.32" y2="393.80" stroke="#000" stroke-width="1" shape-rendering="crispEdges" />
<line x1="650.19" y1="402.80" x2="659.19" y2="393.80" stroke="#000" stroke-width="1" shape-rendering="crispEdges" />
<line x1="862.53" y1="402.80" x2="871.53" y2="393.80" stroke="#000" stroke-width="1" shape-rendering="crispEdges" />
<line x1="1027.69" y1="402.80" x2="1036.69" y2="393.80" stroke="#000" stroke-width="1" shape-rendering="crispEdges" />
<line x1="1125.75" y1="402.80" x2="1134.75" y2="393.80" stroke="#000" stroke-width="1" shape-rendering="crispEdges" />
<line x1="1133.12" y1="402.80" x2="1142.12" y2="393.80" stroke="#000" stroke-width="1" shape-rendering="crispEdges" />
<line x1="100.90" y1="421.00" x2="109.90" y2="412.00" stroke="#000" stroke-width="1" shape-rendering="crispEdges" />
<line x1="126.71" y1="421.00" x2="135.71" y2="412.00" stroke="#000" stroke-width="1" shape-rendering="crispEdges" />
<line x1="617.01" y1="421.00" x2="626.01" y2="412.00" stroke="#000" stroke-width="1" shape-rendering="crispEdges" />
<line x1="642.82" y1="421.00" x2="651.82" y2="412.00" stroke="#000" stroke-width="1" shape-rendering="crispEdges" />
<line x1="1133.12" y1="421.00" x2="1142.12" y2="412.00" stroke="#000" stroke-width="1" shape-rendering="crispEdges" />
<line x1="1158.93" y1="421.00" x2="1167.93" y2="412.00" stroke="#000" stroke-width="1" shape-rendering="crispEdges" />
<line x1="100.90" y1="439.00" x2="109.90" y2="430.00" stroke="#000" stroke-width="1" shape-rendering="crispEdges" />
<line x1="113.80" y1="439.00" x2="122.80" y2="430.00" stroke="#000" stroke-width="1" shape-rendering="crispEdges" />
<line x1="629.91" y1="439.00" x2="638.91" y2="430.00" stroke="#000" stroke-width="1" shape-rendering="crispEdges" />
<line x1="1146.02" y1="439.00" x2="1155.02" y2="430.00" stroke="#000" stroke-width="1" shape-rendering="crispEdges" />
<line x1="1158.93" y1="439.00" x2="1167.93" y2="430.00" stroke="#000" stroke-width="1" shape-rendering="crispEdges" />
<line x1="100.90" y1="456.90" x2="109.90" y2="447.90" stroke="#000" stroke-width="1" shape-rendering="crispEdges" />
<line x1="1158.93" y1="456.90" x2="1167.93" y2="447.90" stroke="#000" stroke-width="1" shape-rendering="crispEdges" />
<text x="132.00" y="389.30" font-size="12" text-anchor="middle" font-weight="normal" letter-spacing="0.6" >40</text>
<text x="189.00" y="394.60" font-size="12" text-anchor="middle" font-weight="normal" letter-spacing="0.6" >8x190=1520</text>
<text x="316.00" y="394.60" font-size="12" text-anchor="middle" font-weight="normal" letter-spacing="0.6" >6x320=1920</text>
<text x="501.90" y="394.60" font-size="12" text-anchor="middle" font-weight="normal" letter-spacing="0.6" >26x120=3120</text>
<text x="635.20" y="394.60" font-size="12" text-anchor="middle" font-weight="normal" letter-spacing="0.6" >500</text>
<text x="759.80" y="394.90" font-size="12" text-anchor="middle" font-weight="normal" letter-spacing="0.6" >24x120=2880</text>
<text x="948.60" y="394.60" font-size="12" text-anchor="middle" font-weight="normal" letter-spacing="0.6" >7x320=2240</text>
<text x="1079.50" y="394.30" font-size="12" text-anchor="middle" font-weight="normal" letter-spacing="0.6" >7x190=1330</text>
<text x="1133.00" y="389.60" font-size="12" text-anchor="middle" font-weight="normal" letter-spacing="0.6" >100</text>
<text x="117.00" y="412.70" font-size="12" text-anchor="middle" font-weight="normal" letter-spacing="0.6" >350</text>
<text x="375.30" y="412.60" font-size="12" text-anchor="middle" font-weight="normal" letter-spacing="0.6" >6650</text>
<text x="633.30" y="412.50" font-size="12" text-anchor="middle" font-weight="normal" letter-spacing="0.6" >350</text>
<text x="891.40" y="412.60" font-size="12" text-anchor="middle" font-weight="normal" letter-spacing="0.6" >6650</text>
<text x="1149.40" y="412.40" font-size="12" text-anchor="middle" font-weight="normal" letter-spacing="0.6" >350</text>
<text x="112.70" y="425.30" font-size="12" text-anchor="middle" font-weight="normal" letter-spacing="0.6" >175</text>
<text x="375.30" y="430.40" font-size="12" text-anchor="middle" font-weight="normal" letter-spacing="0.6" >7000</text>
<text x="891.40" y="430.40" font-size="12" text-anchor="middle" font-weight="normal" letter-spacing="0.6" >7000</text>
<text x="1157.00" y="425.60" font-size="12" text-anchor="middle" font-weight="normal" letter-spacing="0.6" >175</text>
<text x="634.00" y="448.20" font-size="12" text-anchor="middle" font-weight="normal" letter-spacing="0.6" >14350</text>
<line x1="1165.00" y1="310.50" x2="1236.00" y2="310.50" stroke="#000" stroke-width="1" shape-rendering="crispEdges" />
<line x1="1174.00" y1="347.50" x2="1236.00" y2="347.50" stroke="#000" stroke-width="1" shape-rendering="crispEdges" />
<line x1="1174.00" y1="354.50" x2="1236.00" y2="354.50" stroke="#000" stroke-width="1" shape-rendering="crispEdges" />
<line x1="1232.50" y1="305.00" x2="1232.50" y2="359.00" stroke="#000" stroke-width="1" shape-rendering="crispEdges" />
<line x1="1227.90" y1="305.90" x2="1236.90" y2="314.90" stroke="#000" stroke-width="1" shape-rendering="crispEdges" />
<line x1="1227.90" y1="343.10" x2="1236.90" y2="352.10" stroke="#000" stroke-width="1" shape-rendering="crispEdges" />
<line x1="1227.90" y1="349.90" x2="1236.90" y2="358.90" stroke="#000" stroke-width="1" shape-rendering="crispEdges" />
<text x="0" y="4.83" font-size="13.5" text-anchor="middle" font-weight="bold" transform="translate(1223.50 329.00) rotate(-90) scale(1 1.08)">500</text>
<text x="0" y="4.83" font-size="13.5" text-anchor="middle" font-weight="bold" transform="translate(1219.00 350.50) rotate(-90) scale(1 1.08)">100</text>
<text x="1174.40" y="301.00" font-size="12" text-anchor="start" font-weight="normal" letter-spacing="0.6" >3,350</text>
<path d="M 1172 310 L 1174 303.6 L 1185 303.6" stroke="#000" stroke-width="1" fill="none" />
<path d="M 1169.5 306 L 1172 310 L 1175 306.5" stroke="#000" stroke-width="1" fill="none" />
<line x1="394.00" y1="499.00" x2="875.50" y2="499.00" stroke="#000" stroke-width="2" shape-rendering="crispEdges" />
<text x="570.70" y="495.80" font-size="17.5" text-anchor="start" font-weight="normal" >Nr 3</text>
<text x="610.20" y="495.80" font-size="12" text-anchor="start" font-weight="normal" letter-spacing="0.6" >10Ø16 L=6500</text>
<line x1="108.70" y1="544.00" x2="984.00" y2="544.00" stroke="#000" stroke-width="2.2" shape-rendering="crispEdges" />
<path d="M 108 543.7 L 108 554" stroke="#000" stroke-width="2.5" fill="none" />
<text x="483.00" y="527.60" font-size="17.5" text-anchor="start" font-weight="normal" >Nr 1</text>
<text x="520.00" y="527.60" font-size="12" text-anchor="start" font-weight="normal" letter-spacing="0.6" >2Ø16 L=12000</text>
<text x="547.30" y="539.60" font-size="12" text-anchor="middle" font-weight="normal" letter-spacing="0.6" >11882</text>
<path d="M 108 563.5 L 108 574 Q 108.5 580.3 115 580.3 L 641 580.3" stroke="#000" stroke-width="2.6" fill="none" />
<text x="314.50" y="576.00" font-size="17.5" text-anchor="start" font-weight="normal" >Nr 2</text>
<text x="352.80" y="576.00" font-size="12" text-anchor="start" font-weight="normal" letter-spacing="0.6" >3Ø25 L=7390</text>
<text x="377.00" y="592.80" font-size="12" text-anchor="middle" font-weight="normal" letter-spacing="0.6" >7220</text>
<text x="0" y="4.83" font-size="13.5" text-anchor="middle" font-weight="bold" transform="translate(100.50 547.90) rotate(-90) scale(1 1.08)">51</text>
<text x="0" y="4.83" font-size="13.5" text-anchor="middle" font-weight="bold" transform="translate(100.50 567.60) rotate(-90) scale(1 1.08)">238</text>
<line x1="901.30" y1="500.50" x2="990.00" y2="500.50" stroke="#000" stroke-width="3" shape-rendering="crispEdges" />
<path d="M 996 499 L 1155 499 Q 1161 499 1161 504 L 1161 509.7" stroke="#000" stroke-width="2" fill="none" />
<text x="1017.00" y="483.00" font-size="17.5" text-anchor="start" font-weight="normal" >Nr 4</text>
<text x="1055.20" y="483.00" font-size="12" text-anchor="start" font-weight="normal" letter-spacing="0.6" >2Ø16 L=3639</text>
<text x="1074.40" y="495.80" font-size="12" text-anchor="middle" font-weight="normal" letter-spacing="0.6" >2289</text>
<text x="942.50" y="512.50" font-size="12" text-anchor="middle" font-weight="normal" letter-spacing="0.6" >1136</text>
<text x="0" y="4.83" font-size="13.5" text-anchor="middle" font-weight="bold" transform="translate(1168.80 506.30) rotate(-90) scale(1 1.08)">151</text>
<text x="0" y="4.83" font-size="13.5" text-anchor="middle" font-weight="bold" transform="translate(985.50 492.00) rotate(-90) scale(1 1.08)">98</text>
<text x="0" y="4.83" font-size="13.5" text-anchor="middle" font-weight="bold" transform="translate(991.50 497.00) rotate(-90) scale(1 1.08)">15</text>
<line x1="1000.00" y1="494.00" x2="1010.00" y2="505.00" stroke="#000" stroke-width="1" shape-rendering="crispEdges" />
<line x1="1005.50" y1="494.00" x2="1005.50" y2="505.00" stroke="#000" stroke-width="1" shape-rendering="crispEdges" />
<path d="M 629 612.4 L 644 612.4 L 648 614.3 L 1153 614.3 Q 1159.5 614.3 1159.5 607 L 1159.5 597" stroke="#000" stroke-width="2.8" fill="none" />
<text x="843.00" y="609.50" font-size="17.5" text-anchor="start" font-weight="normal" >Nr 5</text>
<text x="882.95" y="609.50" font-size="12" text-anchor="start" font-weight="normal" letter-spacing="0.6" >3Ø25 L=7394</text>
<text x="900.30" y="626.30" font-size="12" text-anchor="middle" font-weight="normal" letter-spacing="0.6" >6973</text>
<text x="0" y="4.83" font-size="13.5" text-anchor="middle" font-weight="bold" transform="translate(1168.80 600.40) rotate(-90) scale(1 1.08)">238</text>
<text x="0" y="4.83" font-size="13.5" text-anchor="middle" font-weight="bold" transform="translate(612.50 613.40) rotate(-90) scale(1 1.08)">25</text>
<text x="634.70" y="608.00" font-size="12" text-anchor="middle" font-weight="normal" letter-spacing="0.6" >203</text>
<text x="0" y="4.83" font-size="13.5" text-anchor="middle" font-weight="bold" transform="translate(650.00 606.50) rotate(-60) scale(1 1.08)">62</text>
<line x1="620.00" y1="607.00" x2="631.00" y2="618.00" stroke="#000" stroke-width="1" shape-rendering="crispEdges" />
<line x1="625.50" y1="608.00" x2="625.50" y2="618.00" stroke="#000" stroke-width="1" shape-rendering="crispEdges" />
<line x1="620.00" y1="613.50" x2="629.00" y2="613.50" stroke="#000" stroke-width="1" shape-rendering="crispEdges" />
<text x="1004.70" y="802.80" font-size="17.5" text-anchor="start" font-weight="normal" >Nr 6</text>
<text x="1043.60" y="802.80" font-size="12" text-anchor="start" font-weight="normal" letter-spacing="0.6" >80Ø8 L=1567</text>
<path d="M 1051.7 819 L 1051.7 850.2 L 1072.7 850.2 L 1072.7 818.3 L 1054.5 808.6 L 1054.5 814.6" stroke="#000" stroke-width="1.4" fill="none" />
<line x1="1051.70" y1="819.00" x2="1056.00" y2="821.50" stroke="#000" stroke-width="1" shape-rendering="crispEdges" />
<text x="0" y="4.83" font-size="13.5" text-anchor="middle" font-weight="bold" transform="translate(1045.30 814.00) rotate(90) scale(1 1.08)">14</text>
<text x="0" y="4.83" font-size="13.5" text-anchor="middle" font-weight="bold" transform="translate(1080.00 834.50) rotate(-90) scale(1 1.08)">445</text>
<text x="1060.30" y="862.60" font-size="12" text-anchor="middle" font-weight="normal" letter-spacing="0.6" >290</text>
<text x="196.00" y="654.90" font-size="17" text-anchor="middle" font-weight="normal" >1-1</text>
<line x1="183.00" y1="657.50" x2="209.00" y2="657.50" stroke="#000" stroke-width="1" shape-rendering="crispEdges" />
<circle cx="196.50" cy="687.50" r="12.00" stroke="#000" stroke-width="1" fill="none" shape-rendering="crispEdges"/>
<circle cx="240.50" cy="687.50" r="12.00" stroke="#000" stroke-width="1" fill="none" shape-rendering="crispEdges"/>
<text x="196.30" y="693.30" font-size="17" text-anchor="middle" font-weight="normal" >5</text>
<text x="240.50" y="693.30" font-size="17" text-anchor="middle" font-weight="normal" >6</text>
<line x1="208.60" y1="687.50" x2="228.20" y2="687.50" stroke="#000" stroke-width="1" shape-rendering="crispEdges" />
<path d="M 222.3 683.3 L 228.20000000000002 687.3 L 222.3 691.3" stroke="#000" stroke-width="1" fill="none" />
<line x1="97.40" y1="730.00" x2="294.30" y2="730.00" stroke="#7a7a7a" stroke-width="2" shape-rendering="crispEdges" />
<line x1="97.40" y1="737.00" x2="294.30" y2="737.00" stroke="#7a7a7a" stroke-width="2" shape-rendering="crispEdges" />
<path d="M 104.4 726.8 L 287.3 726.8 L 287.3 738.8 L 210 738.8 L 210 764 L 182.2 764 L 182.2 738.8 L 104.4 738.8 Z" stroke="#000" stroke-width="2" fill="#bffb80" />
<line x1="105.40" y1="730.00" x2="286.30" y2="730.00" stroke="#7a7a7a" stroke-width="2" shape-rendering="crispEdges" />
<line x1="105.40" y1="737.00" x2="286.30" y2="737.00" stroke="#7a7a7a" stroke-width="2" shape-rendering="crispEdges" />
<line x1="209.50" y1="738.80" x2="209.50" y2="765.00" stroke="#000" stroke-width="3" shape-rendering="crispEdges" />
<line x1="182.20" y1="763.50" x2="210.50" y2="763.50" stroke="#000" stroke-width="3" shape-rendering="crispEdges" />
<path d="M 185.7 762 L 185.7 731.5 Q 185.7 729.5 187.7 729.5 L 206 729.5 Q 208 729.5 208 731.5 L 208 762" stroke="#000" stroke-width="1.2" fill="none" />
<path d="M 187.2 733 L 190.7 736.5" stroke="#000" stroke-width="1.3" fill="none" />
<line x1="196.50" y1="729.00" x2="196.50" y2="734.50" stroke="#000" stroke-width="1" shape-rendering="crispEdges" />
<line x1="196.50" y1="739.50" x2="196.50" y2="763.00" stroke="#000" stroke-width="1" shape-rendering="crispEdges" />
<path d="M 186.7 760.5 L 190.7 755.5 L 208 755.5" stroke="#000" stroke-width="1.2" fill="none" />
<path d="M 196.6 760.5 L 200.1 755.5" stroke="#000" stroke-width="1.2" fill="none" />
<rect x="187.20" y="759.50" width="3.00" height="2.50" stroke="#000" stroke-width="0" fill="#000" />
<rect x="194.60" y="759.50" width="3.00" height="2.50" stroke="#000" stroke-width="0" fill="#000" />
<rect x="205.50" y="759.50" width="3.00" height="2.50" stroke="#000" stroke-width="0" fill="#000" />
<line x1="196.50" y1="699.60" x2="196.50" y2="727.80" stroke="#000" stroke-width="1" shape-rendering="crispEdges" />
<path d="M 191 727 L 195 724.4 L 212.7 724.4" stroke="#000" stroke-width="1" fill="none" />
<text x="201.00" y="720.70" font-size="16" text-anchor="start" font-weight="normal" >1</text>
<line x1="210.00" y1="755.50" x2="311.00" y2="755.50" stroke="#000" stroke-width="1" shape-rendering="crispEdges" />
<text x="297.80" y="751.60" font-size="16" text-anchor="start" font-weight="normal" >2</text>
<line x1="220.00" y1="764.50" x2="358.90" y2="764.50" stroke="#000" stroke-width="1" shape-rendering="crispEdges" />
<line x1="298.90" y1="727.50" x2="358.90" y2="727.50" stroke="#000" stroke-width="1" shape-rendering="crispEdges" />
<line x1="298.90" y1="739.50" x2="340.00" y2="739.50" stroke="#000" stroke-width="1" shape-rendering="crispEdges" />
<line x1="335.50" y1="722.00" x2="335.50" y2="769.00" stroke="#000" stroke-width="1" shape-rendering="crispEdges" />
<line x1="353.50" y1="722.00" x2="353.50" y2="769.00" stroke="#000" stroke-width="1" shape-rendering="crispEdges" />
<line x1="331.10" y1="722.60" x2="340.10" y2="731.60" stroke="#000" stroke-width="1" shape-rendering="crispEdges" />
<line x1="331.10" y1="734.80" x2="340.10" y2="743.80" stroke="#000" stroke-width="1" shape-rendering="crispEdges" />
<line x1="331.10" y1="759.90" x2="340.10" y2="768.90" stroke="#000" stroke-width="1" shape-rendering="crispEdges" />
<line x1="348.80" y1="722.60" x2="357.80" y2="731.60" stroke="#000" stroke-width="1" shape-rendering="crispEdges" />
<line x1="348.80" y1="759.90" x2="357.80" y2="768.90" stroke="#000" stroke-width="1" shape-rendering="crispEdges" />
<text x="0" y="4.83" font-size="13.5" text-anchor="middle" font-weight="bold" transform="translate(322.50 730.30) rotate(-90) scale(1 1.08)">160</text>
<text x="0" y="4.83" font-size="13.5" text-anchor="middle" font-weight="bold" transform="translate(327.00 751.20) rotate(-90) scale(1 1.08)">340</text>
<text x="0" y="4.83" font-size="13.5" text-anchor="middle" font-weight="bold" transform="translate(345.20 746.70) rotate(-90) scale(1 1.08)">500</text>
<line x1="100.00" y1="790.50" x2="292.20" y2="790.50" stroke="#000" stroke-width="1" shape-rendering="crispEdges" />
<line x1="100.00" y1="807.50" x2="292.20" y2="807.50" stroke="#000" stroke-width="1" shape-rendering="crispEdges" />
<line x1="104.50" y1="751.00" x2="104.50" y2="812.20" stroke="#000" stroke-width="1" shape-rendering="crispEdges" />
<line x1="287.50" y1="751.00" x2="287.50" y2="812.20" stroke="#000" stroke-width="1" shape-rendering="crispEdges" />
<line x1="182.50" y1="775.60" x2="182.50" y2="793.30" stroke="#000" stroke-width="1" shape-rendering="crispEdges" />
<line x1="209.50" y1="775.60" x2="209.50" y2="793.30" stroke="#000" stroke-width="1" shape-rendering="crispEdges" />
<line x1="99.90" y1="794.50" x2="108.90" y2="785.50" stroke="#000" stroke-width="1" shape-rendering="crispEdges" />
<line x1="178.30" y1="794.50" x2="187.30" y2="785.50" stroke="#000" stroke-width="1" shape-rendering="crispEdges" />
<line x1="205.40" y1="794.50" x2="214.40" y2="785.50" stroke="#000" stroke-width="1" shape-rendering="crispEdges" />
<line x1="282.80" y1="794.50" x2="291.80" y2="785.50" stroke="#000" stroke-width="1" shape-rendering="crispEdges" />
<line x1="99.90" y1="812.30" x2="108.90" y2="803.30" stroke="#000" stroke-width="1" shape-rendering="crispEdges" />
<line x1="282.80" y1="812.30" x2="291.80" y2="803.30" stroke="#000" stroke-width="1" shape-rendering="crispEdges" />
<text x="144.80" y="785.60" font-size="12" text-anchor="middle" font-weight="normal" letter-spacing="0.6" >1060</text>
<text x="195.60" y="785.60" font-size="12" text-anchor="middle" font-weight="normal" letter-spacing="0.6" >350</text>
<text x="247.80" y="785.60" font-size="12" text-anchor="middle" font-weight="normal" letter-spacing="0.6" >1060</text>
<text x="196.10" y="803.30" font-size="12" text-anchor="middle" font-weight="normal" letter-spacing="0.6" >2470</text>
<text x="508.00" y="650.80" font-size="17" text-anchor="middle" font-weight="normal" >2-2</text>
<line x1="495.00" y1="653.50" x2="521.00" y2="653.50" stroke="#000" stroke-width="1" shape-rendering="crispEdges" />
<circle cx="508.50" cy="683.50" r="12.00" stroke="#000" stroke-width="1" fill="none" shape-rendering="crispEdges"/>
<circle cx="552.50" cy="683.50" r="12.00" stroke="#000" stroke-width="1" fill="none" shape-rendering="crispEdges"/>
<text x="508.60" y="689.20" font-size="17" text-anchor="middle" font-weight="normal" >5</text>
<text x="552.80" y="689.20" font-size="17" text-anchor="middle" font-weight="normal" >6</text>
<line x1="520.90" y1="683.50" x2="540.50" y2="683.50" stroke="#000" stroke-width="1" shape-rendering="crispEdges" />
<path d="M 534.6 679.2 L 540.5 683.2 L 534.6 687.2" stroke="#000" stroke-width="1" fill="none" />
<line x1="409.70" y1="730.00" x2="607.50" y2="730.00" stroke="#7a7a7a" stroke-width="2" shape-rendering="crispEdges" />
<line x1="409.70" y1="737.00" x2="607.50" y2="737.00" stroke="#7a7a7a" stroke-width="2" shape-rendering="crispEdges" />
<path d="M 416.7 726.8 L 600.5 726.8 L 600.5 738.8 L 521.7 738.8 L 521.7 764 L 495.5 764 L 495.5 738.8 L 416.7 738.8 Z" stroke="#000" stroke-width="2" fill="#bffb80" />
<line x1="417.70" y1="730.00" x2="599.50" y2="730.00" stroke="#7a7a7a" stroke-width="2" shape-rendering="crispEdges" />
<line x1="417.70" y1="737.00" x2="599.50" y2="737.00" stroke="#7a7a7a" stroke-width="2" shape-rendering="crispEdges" />
<line x1="520.50" y1="738.80" x2="520.50" y2="765.00" stroke="#000" stroke-width="3" shape-rendering="crispEdges" />
<line x1="495.50" y1="763.50" x2="522.20" y2="763.50" stroke="#000" stroke-width="3" shape-rendering="crispEdges" />
<path d="M 499.0 762 L 499.0 731.5 Q 499.0 729.5 501.0 729.5 L 517.7 729.5 Q 519.7 729.5 519.7 731.5 L 519.7 762" stroke="#000" stroke-width="1.2" fill="none" />
<path d="M 500.5 733 L 504.0 736.5" stroke="#000" stroke-width="1.3" fill="none" />
<line x1="508.50" y1="729.00" x2="508.50" y2="734.50" stroke="#000" stroke-width="1" shape-rendering="crispEdges" />
<line x1="508.50" y1="739.50" x2="508.50" y2="763.00" stroke="#000" stroke-width="1" shape-rendering="crispEdges" />
<path d="M 500.0 760.5 L 504.0 755.5 L 519.7 755.5" stroke="#000" stroke-width="1.2" fill="none" />
<path d="M 509.1 760.5 L 512.6 755.5" stroke="#000" stroke-width="1.2" fill="none" />
<rect x="500.50" y="759.50" width="3.00" height="2.50" stroke="#000" stroke-width="0" fill="#000" />
<rect x="507.10" y="759.50" width="3.00" height="2.50" stroke="#000" stroke-width="0" fill="#000" />
<rect x="517.20" y="759.50" width="3.00" height="2.50" stroke="#000" stroke-width="0" fill="#000" />
<path d="M 485.1 727.5 L 489.1 732" stroke="#000" stroke-width="1.3" fill="none" />
<path d="M 489.40000000000003 727.5 L 493.40000000000003 732" stroke="#000" stroke-width="1.3" fill="none" />
<path d="M 493.70000000000005 727.5 L 497.70000000000005 732" stroke="#000" stroke-width="1.3" fill="none" />
<path d="M 498.0 727.5 L 502.0 732" stroke="#000" stroke-width="1.3" fill="none" />
<path d="M 515.2 727.5 L 519.2 732" stroke="#000" stroke-width="1.3" fill="none" />
<path d="M 519.5 727.5 L 523.5 732" stroke="#000" stroke-width="1.3" fill="none" />
<path d="M 523.8000000000001 727.5 L 527.8000000000001 732" stroke="#000" stroke-width="1.3" fill="none" />
<path d="M 528.1 727.5 L 532.1 732" stroke="#000" stroke-width="1.3" fill="none" />
<line x1="394.70" y1="725.50" x2="478.60" y2="725.50" stroke="#000" stroke-width="1" shape-rendering="crispEdges" />
<line x1="478.60" y1="725.50" x2="522.60" y2="725.50" stroke="#000" stroke-width="1" shape-rendering="crispEdges" stroke-dasharray="5 1 1 1"/>
<line x1="508.50" y1="695.50" x2="508.50" y2="727.00" stroke="#000" stroke-width="1" shape-rendering="crispEdges" />
<line x1="505.50" y1="720.00" x2="505.50" y2="727.00" stroke="#000" stroke-width="1" shape-rendering="crispEdges" />
<line x1="505.00" y1="720.50" x2="525.00" y2="720.50" stroke="#000" stroke-width="1" shape-rendering="crispEdges" />
<text x="511.00" y="716.90" font-size="16" text-anchor="start" font-weight="normal" >1</text>
<text x="398.00" y="719.70" font-size="16" text-anchor="start" font-weight="normal" >3</text>
<line x1="521.70" y1="750.50" x2="622.00" y2="750.50" stroke="#000" stroke-width="1" shape-rendering="crispEdges" />
<line x1="521.70" y1="754.50" x2="638.80" y2="754.50" stroke="#000" stroke-width="1" shape-rendering="crispEdges" />
<text x="609.00" y="750.30" font-size="16" text-anchor="start" font-weight="normal" >5</text>
<text x="625.60" y="750.30" font-size="16" text-anchor="start" font-weight="normal" >2</text>
<path d="M 495.5 764 L 495.5 772 L 521.7 772 L 521.7 764" stroke="#666" stroke-width="1" fill="none" stroke-dasharray="4 2"/>
<line x1="508.50" y1="764.00" x2="508.50" y2="776.00" stroke="#000" stroke-width="1" shape-rendering="crispEdges" />
<text x="800.20" y="650.10" font-size="17" text-anchor="middle" font-weight="normal" >3-3</text>
<line x1="787.20" y1="653.50" x2="813.20" y2="653.50" stroke="#000" stroke-width="1" shape-rendering="crispEdges" />
<circle cx="800.50" cy="683.50" r="12.00" stroke="#000" stroke-width="1" fill="none" shape-rendering="crispEdges"/>
<circle cx="844.50" cy="683.50" r="12.00" stroke="#000" stroke-width="1" fill="none" shape-rendering="crispEdges"/>
<text x="800.40" y="689.20" font-size="17" text-anchor="middle" font-weight="normal" >5</text>
<text x="844.60" y="689.20" font-size="17" text-anchor="middle" font-weight="normal" >6</text>
<line x1="812.70" y1="683.50" x2="832.30" y2="683.50" stroke="#000" stroke-width="1" shape-rendering="crispEdges" />
<path d="M 826.4 679.2 L 832.3 683.2 L 826.4 687.2" stroke="#000" stroke-width="1" fill="none" />
<line x1="701.90" y1="730.00" x2="898.60" y2="730.00" stroke="#7a7a7a" stroke-width="2" shape-rendering="crispEdges" />
<line x1="701.90" y1="737.00" x2="898.60" y2="737.00" stroke="#7a7a7a" stroke-width="2" shape-rendering="crispEdges" />
<path d="M 708.9 726.8 L 891.6 726.8 L 891.6 738.8 L 813.5 738.8 L 813.5 764 L 786.6 764 L 786.6 738.8 L 708.9 738.8 Z" stroke="#000" stroke-width="2" fill="#bffb80" />
<line x1="709.90" y1="730.00" x2="890.60" y2="730.00" stroke="#7a7a7a" stroke-width="2" shape-rendering="crispEdges" />
<line x1="709.90" y1="737.00" x2="890.60" y2="737.00" stroke="#7a7a7a" stroke-width="2" shape-rendering="crispEdges" />
<line x1="812.50" y1="738.80" x2="812.50" y2="765.00" stroke="#000" stroke-width="3" shape-rendering="crispEdges" />
<line x1="786.60" y1="763.50" x2="814.00" y2="763.50" stroke="#000" stroke-width="3" shape-rendering="crispEdges" />
<path d="M 790.1 762 L 790.1 731.5 Q 790.1 729.5 792.1 729.5 L 809.5 729.5 Q 811.5 729.5 811.5 731.5 L 811.5 762" stroke="#000" stroke-width="1.2" fill="none" />
<path d="M 791.6 733 L 795.1 736.5" stroke="#000" stroke-width="1.3" fill="none" />
<line x1="800.50" y1="729.00" x2="800.50" y2="734.50" stroke="#000" stroke-width="1" shape-rendering="crispEdges" />
<line x1="800.50" y1="739.50" x2="800.50" y2="763.00" stroke="#000" stroke-width="1" shape-rendering="crispEdges" />
<path d="M 791.1 760.5 L 795.1 755.5 L 811.5 755.5" stroke="#000" stroke-width="1.2" fill="none" />
<path d="M 800.55 760.5 L 804.05 755.5" stroke="#000" stroke-width="1.2" fill="none" />
<rect x="791.60" y="759.50" width="3.00" height="2.50" stroke="#000" stroke-width="0" fill="#000" />
<rect x="798.55" y="759.50" width="3.00" height="2.50" stroke="#000" stroke-width="0" fill="#000" />
<rect x="809.00" y="759.50" width="3.00" height="2.50" stroke="#000" stroke-width="0" fill="#000" />
<path d="M 776.55 727.5 L 780.55 732" stroke="#000" stroke-width="1.3" fill="none" />
<path d="M 780.8499999999999 727.5 L 784.8499999999999 732" stroke="#000" stroke-width="1.3" fill="none" />
<path d="M 785.15 727.5 L 789.15 732" stroke="#000" stroke-width="1.3" fill="none" />
<path d="M 789.4499999999999 727.5 L 793.4499999999999 732" stroke="#000" stroke-width="1.3" fill="none" />
<path d="M 806.65 727.5 L 810.65 732" stroke="#000" stroke-width="1.3" fill="none" />
<path d="M 810.9499999999999 727.5 L 814.9499999999999 732" stroke="#000" stroke-width="1.3" fill="none" />
<path d="M 815.25 727.5 L 819.25 732" stroke="#000" stroke-width="1.3" fill="none" />
<path d="M 819.55 727.5 L 823.55 732" stroke="#000" stroke-width="1.3" fill="none" />
<line x1="686.90" y1="725.50" x2="770.05" y2="725.50" stroke="#000" stroke-width="1" shape-rendering="crispEdges" />
<line x1="770.05" y1="725.50" x2="814.05" y2="725.50" stroke="#000" stroke-width="1" shape-rendering="crispEdges" stroke-dasharray="5 1 1 1"/>
<line x1="800.50" y1="695.50" x2="800.50" y2="727.00" stroke="#000" stroke-width="1" shape-rendering="crispEdges" />
<line x1="797.50" y1="720.00" x2="797.50" y2="727.00" stroke="#000" stroke-width="1" shape-rendering="crispEdges" />
<line x1="797.50" y1="720.50" x2="816.80" y2="720.50" stroke="#000" stroke-width="1" shape-rendering="crispEdges" />
<text x="805.20" y="716.90" font-size="16" text-anchor="start" font-weight="normal" >1</text>
<text x="689.90" y="719.70" font-size="16" text-anchor="start" font-weight="normal" >3</text>
<line x1="813.50" y1="755.50" x2="914.50" y2="755.50" stroke="#000" stroke-width="1" shape-rendering="crispEdges" />
<text x="901.90" y="750.30" font-size="16" text-anchor="start" font-weight="normal" >5</text>
<text x="1061.10" y="654.40" font-size="17" text-anchor="middle" font-weight="normal" >4-4</text>
<line x1="1048.10" y1="657.50" x2="1074.10" y2="657.50" stroke="#000" stroke-width="1" shape-rendering="crispEdges" />
<circle cx="1061.50" cy="687.50" r="12.00" stroke="#000" stroke-width="1" fill="none" shape-rendering="crispEdges"/>
<circle cx="1105.50" cy="687.50" r="12.00" stroke="#000" stroke-width="1" fill="none" shape-rendering="crispEdges"/>
<text x="1061.10" y="693.50" font-size="17" text-anchor="middle" font-weight="normal" >5</text>
<text x="1105.30" y="693.50" font-size="17" text-anchor="middle" font-weight="normal" >6</text>
<line x1="1073.40" y1="687.50" x2="1093.00" y2="687.50" stroke="#000" stroke-width="1" shape-rendering="crispEdges" />
<path d="M 1087.1 683.5 L 1093.0 687.5 L 1087.1 691.5" stroke="#000" stroke-width="1" fill="none" />
<line x1="962.40" y1="730.00" x2="1159.80" y2="730.00" stroke="#7a7a7a" stroke-width="2" shape-rendering="crispEdges" />
<line x1="962.40" y1="737.00" x2="1159.80" y2="737.00" stroke="#7a7a7a" stroke-width="2" shape-rendering="crispEdges" />
<path d="M 969.4 726.8 L 1152.8 726.8 L 1152.8 738.8 L 1075 738.8 L 1075 764 L 1048.6 764 L 1048.6 738.8 L 969.4 738.8 Z" stroke="#000" stroke-width="2" fill="#bffb80" />
<line x1="970.40" y1="730.00" x2="1151.80" y2="730.00" stroke="#7a7a7a" stroke-width="2" shape-rendering="crispEdges" />
<line x1="970.40" y1="737.00" x2="1151.80" y2="737.00" stroke="#7a7a7a" stroke-width="2" shape-rendering="crispEdges" />
<line x1="1074.50" y1="738.80" x2="1074.50" y2="765.00" stroke="#000" stroke-width="3" shape-rendering="crispEdges" />
<line x1="1048.60" y1="763.50" x2="1075.50" y2="763.50" stroke="#000" stroke-width="3" shape-rendering="crispEdges" />
<path d="M 1052.1 762 L 1052.1 731.5 Q 1052.1 729.5 1054.1 729.5 L 1071 729.5 Q 1073 729.5 1073 731.5 L 1073 762" stroke="#000" stroke-width="1.2" fill="none" />
<path d="M 1053.6 733 L 1057.1 736.5" stroke="#000" stroke-width="1.3" fill="none" />
<line x1="1061.50" y1="729.00" x2="1061.50" y2="734.50" stroke="#000" stroke-width="1" shape-rendering="crispEdges" />
<line x1="1061.50" y1="739.50" x2="1061.50" y2="763.00" stroke="#000" stroke-width="1" shape-rendering="crispEdges" />
<path d="M 1053.1 760.5 L 1057.1 755.5 L 1073 755.5" stroke="#000" stroke-width="1.2" fill="none" />
<path d="M 1062.3 760.5 L 1065.8 755.5" stroke="#000" stroke-width="1.2" fill="none" />
<rect x="1053.60" y="759.50" width="3.00" height="2.50" stroke="#000" stroke-width="0" fill="#000" />
<rect x="1060.30" y="759.50" width="3.00" height="2.50" stroke="#000" stroke-width="0" fill="#000" />
<rect x="1070.50" y="759.50" width="3.00" height="2.50" stroke="#000" stroke-width="0" fill="#000" />
<line x1="1061.50" y1="699.80" x2="1061.50" y2="727.00" stroke="#000" stroke-width="1" shape-rendering="crispEdges" />
<line x1="1058.50" y1="724.40" x2="1058.50" y2="727.00" stroke="#000" stroke-width="1" shape-rendering="crispEdges" />
<line x1="1058.00" y1="724.50" x2="1077.80" y2="724.50" stroke="#000" stroke-width="1" shape-rendering="crispEdges" />
<text x="1064.40" y="720.80" font-size="16" text-anchor="start" font-weight="normal" >4</text>
<line x1="1075.00" y1="755.50" x2="1176.40" y2="755.50" stroke="#000" stroke-width="1" shape-rendering="crispEdges" />
<text x="1162.50" y="750.80" font-size="16" text-anchor="start" font-weight="normal" >5</text>
</svg>
<div id="frame" class="abs"></div>
</body></html>
